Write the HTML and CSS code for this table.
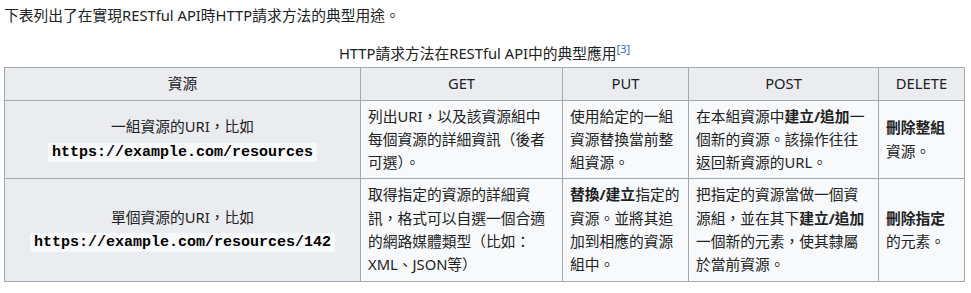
FILE: index.html
```html
<!DOCTYPE html>
<html lang="zh-Hant">
<head>
<meta charset="utf-8">
<title>RESTful API</title>
<link rel="stylesheet" href="styles.css">
</head>
<body>
<div class="page">
  <p class="intro">下表列出了在實現RESTful API時HTTP請求方法的典型用途。</p>
  <table class="wikitable">
    <caption>HTTP請求方法在RESTful API中的典型應用<sup class="ref">[3]</sup></caption>
    <colgroup>
      <col class="c-res">
      <col class="c-get">
      <col class="c-put">
      <col class="c-post">
      <col class="c-del">
    </colgroup>
    <thead>
      <tr>
        <th>資源</th>
        <th>GET</th>
        <th>PUT</th>
        <th>POST</th>
        <th>DELETE</th>
      </tr>
    </thead>
    <tbody>
      <tr>
        <th>一組資源的URI，比如<br><code>https://example.com/resources</code></th>
        <td>列出URI，以及該資源組中每個資源的詳細資訊（後者可選）。</td>
        <td>使用給定的一組資源替換當前整組資源。</td>
        <td>在本組資源中<b>建立/追加</b>一個新的資源。該操作往往返回新資源的URL。</td>
        <td><b>刪除整組</b>資源。</td>
      </tr>
      <tr>
        <th>單個資源的URI，比如<br><code>https://example.com/resources/142</code></th>
        <td>取得指定的資源的詳細資訊，格式可以自選一個合適的網路媒體類型（比如：XML、JSON等）</td>
        <td><b>替換/建立</b>指定的資源。並將其追加到相應的資源組中。</td>
        <td>把指定的資源當做一個資源組，並在其下<b>建立/追加</b>一個新的元素，使其隸屬於當前資源。</td>
        <td><b>刪除指定</b>的元素。</td>
      </tr>
    </tbody>
  </table>
</div>
</body>
</html>
```
FILE: styles.css
```css
html, body {
  margin: 0;
  padding: 0;
  background: #ffffff;
}

body {
  font-family: "Noto Sans", "Noto Sans CJK TC", sans-serif;
  font-size: 14.75px;
  line-height: 23.3px;
  color: #202122;
}

.page {
  padding: 4px 4px 0 4px;
}

.intro {
  margin: 0 0 16px 0;
  line-height: 22px;
}

.wikitable {
  width: 960px;
  table-layout: fixed;
  border-collapse: collapse;
  background: #f8f9fa;
  color: #202122;
}

.wikitable caption {
  padding: 0 0 2px 0;
  line-height: 23.3px;
}

.ref {
  font-size: 11px;
  line-height: 1;
  color: #3366cc;
  vertical-align: 6px;
}

.c-res { width: 356px; }
.c-get { width: 202px; }
.c-put { width: 126px; }
.c-post { width: 190px; }
.c-del { width: 86px; }

.wikitable th,
.wikitable td {
  border: 1px solid #a2a9b1;
  padding: 4px 7px;
  vertical-align: middle;
}

.wikitable th {
  background: #eaecf0;
  font-weight: normal;
  text-align: center;
}

.wikitable td {
  text-align: left;
}

.wikitable b {
  font-weight: 700;
}

.wikitable code {
  font-family: "Liberation Mono", monospace;
  font-size: 15px;
  font-weight: 700;
  background: #f8f9fa;
  color: #000000;
  padding: 1px 4px;
  border-radius: 2px;
}
```
